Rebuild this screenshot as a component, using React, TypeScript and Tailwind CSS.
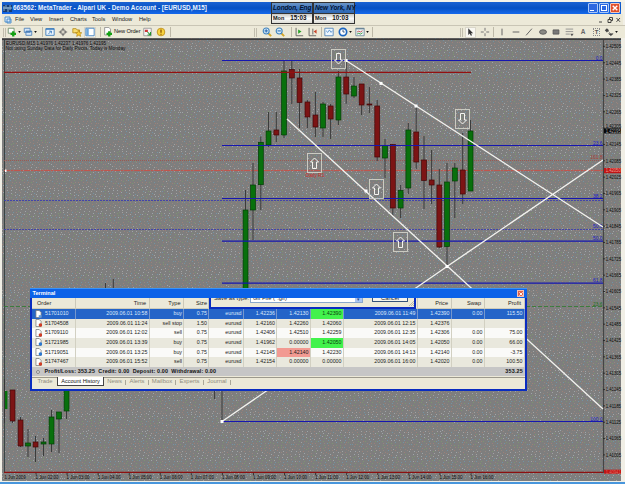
import React from "react";

type Candle = [number, number, number, number, number, "g" | "r"];

// centre x, high, body top, body bottom, low, colour
const candles: Candle[] = [
  [12.5, 390, 390, 421, 423, "r"],
  [20.5, 417, 420, 446, 447, "r"],
  [28, 429, 443, 446, 457, "g"],
  [35.5, 436, 442, 447, 462, "r"],
  [43.5, 438, 442, 444, 456, "g"],
  [51.5, 410, 417, 444, 452, "g"],
  [59, 412, 412, 419, 453, "g"],
  [66.5, 388, 388, 411, 419, "g"],
  [245.5, 190, 210, 289, 289, "g"],
  [253, 163, 185, 210, 240, "g"],
  [260.8, 136.5, 142.3, 184.7, 210, "g"],
  [268.5, 112, 131, 145, 147, "g"],
  [276.3, 112, 130, 135, 142, "r"],
  [284, 60, 71, 135, 138, "g"],
  [291.8, 61, 69.5, 78, 104, "r"],
  [299.5, 69, 78, 102.5, 128, "r"],
  [307.4, 100, 102, 117, 128, "r"],
  [315.4, 92, 115, 127, 137, "r"],
  [323, 102, 104, 128, 137, "g"],
  [330.6, 104, 106, 119, 139, "r"],
  [338.4, 71, 77, 120, 125, "g"],
  [346.2, 60, 77, 94, 104, "r"],
  [354, 77, 86, 96, 98, "g"],
  [361.6, 84, 84, 105, 115, "r"],
  [369.4, 87, 104, 105, 113, "r"],
  [377.2, 100, 106, 157, 161, "r"],
  [385, 139, 145.5, 158, 178, "g"],
  [392.8, 144, 144.5, 208, 216, "r"],
  [400.6, 185, 190.5, 208, 218, "g"],
  [408.3, 123, 130, 188, 194, "g"],
  [416.2, 106, 132, 162, 169, "r"],
  [424, 136, 160, 180.5, 209, "r"],
  [431.6, 150, 180, 185, 204, "r"],
  [439.3, 169, 185, 247, 248, "r"],
  [447, 163, 182, 246.5, 266, "g"],
  [454.8, 163, 168, 181, 218, "g"],
  [462.7, 133, 170, 194, 204, "r"],
  [470.5, 120, 131, 191, 191, "g"],
];

const fibs: [number, string][] = [
  [60.5, "0.0"],
  [145.5, "23.6"],
  [198.5, "38.2"],
  [241.2, "50.0"],
  [283.2, "61.8"],
  [421.5, "100.0"],
];

const hours = ["02:00", "03:00", "04:00", "05:00", "06:00", "07:00", "08:00", "09:00", "10:00", "11:00", "12:00", "13:00", "14:00", "15:00", "16:00"];

// Evenly scattered specks for the chart's dithered grey
const speckColors = ["#a2a2a2", "#7393a3", "#9c8078", "#9fa5a8", "#7d9570", "#96867f"];
const specks = Array.from({ length: 420 }, (_, i) => ({
  x: Math.floor(((i * 0.7548776662) % 1) * 59),
  y: Math.floor(((i * 0.5698402910) % 1) * 61),
  fill: speckColors[(i * 7) % 6 === 0 ? (i % 5) + 1 : (i * 5 + (i >> 3)) % 6],
}));

function Arrow({ x, y, up }: { x: number; y: number; up?: boolean }) {
  return (
    <g transform={`translate(${x} ${y})`} fill="none" stroke="#d2d2c8">
      <rect x="0.5" y="0.5" width="14" height="19" strokeWidth="0.9" />
      <path
        transform={up ? "rotate(180 7.5 10)" : undefined}
        d="M5.5 4.5h4v6.5h2L7.5 15 3.5 11h2z"
        strokeWidth="1"
        stroke="#f4f4f0"
      />
    </g>
  );
}

function Chart() {
  return (
    <svg viewBox="0 38 625 443" width="625" height="443" className="block" fontFamily="'Liberation Sans', Arial, sans-serif">
      <defs>
        <pattern id="grain" width="59" height="61" patternUnits="userSpaceOnUse">
          <rect width="59" height="61" fill="#7e7e7e" />
          {specks.map((s, i) => (
            <rect key={i} x={s.x} y={s.y} width="1" height="1" fill={s.fill} />
          ))}
        </pattern>
      </defs>
      <rect x="0" y="38" width="625" height="443" fill="#f1efe6" />
      <rect x="2" y="38" width="619" height="443" fill="url(#grain)" />
      <path d="M2 39.2H621" stroke="#3c3c3c" strokeWidth="1.4" />
      <path d="M4.5 40V473" stroke="#3a4444" />
      <path d="M603.5 40V473" stroke="#454545" strokeWidth="1.2" />

      <path d="M4 160.5H603" stroke="#a34c44" strokeWidth="0.8" strokeDasharray="1 1" />
      <path d="M4 170.5H603" stroke="#d03a30" strokeWidth="1.1" strokeDasharray="6 1 2 1" />
      <path d="M4 170.5H603" stroke="#b0706a" strokeWidth="1.6" opacity="0.5" />
      <path d="M4 200.5H603M4 229.5H603" stroke="#3c3cae" strokeWidth="0.9" strokeDasharray="2 1" />
      <path d="M4 306.5H603" stroke="#2c7a2c" strokeWidth="0.8" strokeDasharray="4 2" />
      <path d="M4 472.4H603" stroke="#8c1010" strokeWidth="1.2" />

      {candles.map(([x, h, t, b, l, c]) => (
        <g key={x}>
          <path d={`M${x} ${h}V${l}`} stroke="#333" strokeWidth="0.9" />
          <rect
            x={x - 2.4}
            y={t}
            width="4.9"
            height={b - t}
            fill={c === "g" ? "#08700c" : "#7c1414"}
            stroke={c === "g" ? "#033c06" : "#420808"}
            strokeWidth="0.7"
          />
        </g>
      ))}
      <path d="M4.5 379V423M214.6 388V399M222 388V421M105.5 283V289M113.3 279V289" stroke="#333" strokeWidth="0.9" />
      <rect x="5" y="391" width="2.4" height="18" fill="#08700c" />

      <path d="M4 72.4H471" stroke="#941010" strokeWidth="1.3" />
      {fibs.map(([y, label]) => (
        <g key={label}>
          <path d={`M222 ${y}H603`} stroke="#1616b0" strokeWidth="1.2" />
          <text x="602.5" y={y - 0.8} fontSize="4.9" fill="#2020c4" textAnchor="end">
            {label}
          </text>
        </g>
      ))}
      <text x="602.5" y="159.3" fontSize="4.9" fill="#a83c34" textAnchor="end">161.8</text>
      <text x="602.5" y="228.3" fontSize="4.9" fill="#2020c4" textAnchor="end">50.0</text>
      <text x="602.5" y="305.5" fontSize="4.9" fill="#1c701c" textAnchor="end">23.6</text>
      <text x="305.5" y="176.600" fontSize="5.2" fill="#d03028" textLength="19" lengthAdjust="spacingAndGlyphs">
        Daily R1
      </text>

      <g stroke="#f2f2ee" strokeWidth="1.35" fill="none">
        <path d="M346 60.5L603 227M287 119L603 409M222 421.5L447 266.5L603 160" />
      </g>
      <g fill="#fff">
        {[[346, 60.5], [381, 83.4], [416, 106], [366, 191], [447, 266.5], [222, 421.5]].map(([x, y]) => (
          <rect key={x} x={x - 1.5} y={y - 1.5} width="3" height="3" />
        ))}
        <rect x="5" y="169.5" width="1.5" height="2.5" />
      </g>
      <Arrow x={331} y={49} />
      <Arrow x={307} y={153} up />
      <Arrow x={369} y={179} up />
      <Arrow x={393} y={232} up />
      <Arrow x={455} y={109} />

      <g fontSize="5.5" fill="#0c0c0c">
        {Array.from({ length: 26 }, (_, i) => {
          const y = 46.4 + i * 16.34;
          return (
            <g key={i}>
              <path d={`M603 ${y}h2`} stroke="#222" strokeWidth="0.8" />
              <text x="605.7" y={i === 5 ? 128.2 : y + 1.9} fontSize={i === 5 ? 4.6 : 5.5} textLength="15.3" lengthAdjust="spacingAndGlyphs">
                {(1.42505 - i * 0.0006).toFixed(5)}
              </text>
            </g>
          );
        })}
        <rect x="604" y="128.4" width="17" height="5" fill="#080808" />
        <text x="605.7" y="132.8" fontSize="4.8" fill="#a8a8a8" textLength="15" lengthAdjust="spacingAndGlyphs">1.42195</text>
        <rect x="604" y="168" width="17" height="5.2" fill="#c01414" />
        <text x="605.7" y="172.4" fontSize="5" fill="#f0a098" textLength="15" lengthAdjust="spacingAndGlyphs">1.42050</text>
        <rect x="604" y="469.7" width="17" height="4" fill="#c01414" />
        <text x="605.7" y="473.5" fontSize="4.8" fill="#e06a60" textLength="15" lengthAdjust="spacingAndGlyphs">1.40941</text>

        <text x="4.5" y="479" textLength="21" lengthAdjust="spacingAndGlyphs">1 Jun 2009</text>
        {hours.map((h, i) => (
          <g key={h}>
            <path d={`M${36 + i * 31.07} 473v2`} stroke="#222" strokeWidth="0.8" />
            <text x={35.5 + i * 31.07} y="479" textLength="23" lengthAdjust="spacingAndGlyphs">
              {`1 Jun ${h}`}
            </text>
          </g>
        ))}
        <text x="6" y="45.4" fontSize="5.2" textLength="100" lengthAdjust="spacingAndGlyphs">
          EURUSD,M15  1.41976 1.42237 1.41976 1.42195
        </text>
        <text x="5.5" y="50.4" fontSize="5.2" textLength="120" lengthAdjust="spacingAndGlyphs">
          Not using Sunday Data for Daily Pivots.  Today is Monday
        </text>
      </g>
    </svg>
  );
}

function Icon({ w, children }: { w: string; children?: React.ReactNode }) {
  return (
    <span className={`flex h-full shrink-0 items-center justify-center ${w}`}>
      <svg viewBox="0 0 12 12" width="10" height="10" fill="none">
        {children}
      </svg>
    </span>
  );
}

const Caret = () => (
  <svg viewBox="0 0 4 3" width="3" height="2" className="shrink-0">
    <path d="M0 0h4L2 3z" fill="#111" />
  </svg>
);
const Sep = () => <span className="h-[10px] w-px shrink-0 bg-[#bdb9a8]" />;
const Grip = () => <span className="h-[9px] w-[3px] shrink-0 border-x border-[#c2beae]" />;

const Plus = () => (
  <path d="M7.5 5v6.500M4.200 8.200h6.600" stroke="#12a012" strokeWidth="2.800" />
);

function Magnifier({ plus }: { plus?: boolean }) {
  return (
    <>
      <path d="M7.5 7.5L11 11" stroke="#d5a628" strokeWidth="2.2" />
      <circle cx="5" cy="4.7" r="3.6" fill="#d7ecfb" stroke="#3f82bd" strokeWidth="1.3" />
      <path d={plus ? "M3 4.7h4M5 2.7v4" : "M3 4.7h4"} stroke="#1e62ac" strokeWidth="1.2" />
    </>
  );
}

function Toolbar() {
  return (
    <div className="flex h-[13px] items-center border-t border-[#c9c5b5] bg-[#ece9d8]">
      <div className="flex h-full w-[254px] items-center pl-[3px]">
        <Grip />
        <Icon w="w-[12px]">
          <path d="M1.5 1.5h7v6h-7z" fill="#fff" stroke="#668a66" />
          <Plus />
        </Icon>
        <Caret />
        <Icon w="w-[13px]">
          <path d="M1.5 1.5h7v5h-7zM3.5 5h7v5h-7z" fill="#d4e6f8" stroke="#4b80b8" />
          <path d="M3.5 5.4h7" stroke="#4b80b8" strokeWidth="1.5" />
        </Icon>
        <Caret />
        <span className="w-[5px]" />
        <Sep />
        <Icon w="w-[13px]">
          <path d="M1 2h10v8H1z" fill="#eaf4fd" stroke="#3377bb" />
          <path d="M1 2.5h10" stroke="#3377bb" strokeWidth="1.5" />
          <path d="M4 8.500l3.500-3.500M5 5h2.700v2.700" stroke="#3377bb" />
        </Icon>
        <Icon w="w-[14px]">
          <circle cx="6" cy="6" r="3" stroke="#666" />
          <path d="M6 1v4M6 7v4M1 6h4M7 6h4" stroke="#666" strokeWidth="1.2" />
        </Icon>
        <Icon w="w-[13px]">
          <path d="M1 2h4l1 1.5h3V7H1z" fill="#f8db6b" stroke="#b68a17" />
          <path d="M8 4l1.2 2.5 2.6.3-1.9 1.9.5 2.6L8 10l-2.4 1.3.5-2.6L4.2 6.8l2.6-.3z" fill="#f6c934" stroke="#ae7e10" strokeWidth="0.7" />
        </Icon>
        <span className="ml-px flex h-[11px] w-[12px] items-center border border-[#d8d5c8] bg-[#f8f7f1]">
          <Icon w="w-[10px]">
            <path d="M1 1.5h10v9H1z" fill="#fff" stroke="#3377bb" />
            <path d="M1.5 2h3v8h-3z" fill="#6aa7de" />
          </Icon>
        </span>
        <span className="w-[4px]" />
        <Sep />
        <Icon w="w-[13px]">
          <path d="M2 .5h5l2 2v7H2z" fill="#fff" stroke="#888" />
          <Plus />
        </Icon>
        <span className="w-[29px] whitespace-nowrap text-[5.700px] leading-none tracking-[-0.120px] text-[#111]">New Order</span>
        <Icon w="w-[9px]">
          <path d="M1 1h10v10H1z" fill="#f4f4f4" stroke="#888" />
          <path d="M2.5 3h4v3h-4z" fill="#cc3535" />
          <path d="M6 6l4 4M10 6v4H6" stroke="#21922b" strokeWidth="1.4" />
        </Icon>
        <Icon w="w-[18px]">
          <circle cx="6" cy="6" r="4.6" fill="#f8d33e" stroke="#bd8c13" />
          <path d="M6 3v3.8M6 8v1.3" stroke="#8a5604" strokeWidth="1.6" />
        </Icon>
        <Sep />
      </div>
      <div className="flex h-full w-[206px] items-center">
        <Grip />
        <span className="w-[5px]" />
        <Icon w="w-[10px]"><Magnifier plus /></Icon>
        <Icon w="w-[16px]"><Magnifier /></Icon>
        <span className="w-[3px]" />
        <Sep />
        <Icon w="w-[13px]">
          <path d="M2.5 1v9.5H11" stroke="#555" />
          <path d="M5 3l4 2.5L5 8z" fill="#22a022" />
        </Icon>
        <Icon w="w-[13px]">
          <path d="M2.5 1v9.5H11M7 2v7" stroke="#555" />
          <path d="M11.5 3v5L8 5.5z" fill="#c84428" />
        </Icon>
        <span className="w-[3px]" />
        <Sep />
        <Icon w="w-[14px]">
          <path d="M1 1.5h10v9H1z" fill="#eef7ff" stroke="#4b80b8" />
          <path d="M2.5 4.5l2 2 2-3 2 3 1.5-2" stroke="#508bc9" />
        </Icon>
        <Icon w="w-[13px]">
          <circle cx="6" cy="6" r="4.4" fill="#fff" stroke="#1c66c0" strokeWidth="2" />
          <path d="M6 3.3V6h2" stroke="#1b3f70" />
        </Icon>
        <Caret />
        <span className="w-[2px]" />
        <Icon w="w-[12px]">
          <path d="M1 1.5h10v9H1z" fill="#eef4f6" stroke="#6b8596" />
          <path d="M1 2h10" stroke="#6b8596" strokeWidth="1.6" />
          <path d="M2.5 6l2-1 2 1L9 4.5" stroke="#bc3e3e" />
          <path d="M2.5 8.5l2-1 2 1L9 7" stroke="#22922c" />
        </Icon>
        <Caret />
        <span className="w-[3px]" />
        <Sep />
      </div>
      <div className="flex h-full flex-1 items-center">
        <Grip />
        <span className="ml-[2px] flex h-[11px] w-[11px] items-center border border-[#dad7ca] bg-[#f8f7f1]">
          <Icon w="w-[9px]">
            <path d="M3 1v9l2-2 1.5 3 1.5-.8L6.7 7.500H9.500z" fill="#333" />
          </Icon>
        </span>
        <Icon w="w-[17px]"><path d="M6 1v3.500M6 7.500V11M1 6h3.500M7.500 6H11" stroke="#777" strokeWidth="1.200" /></Icon>
        <Sep />
        <Icon w="w-[15px]"><path d="M6 2v8" stroke="#666" strokeWidth="1.200" /></Icon>
        <Icon w="w-[13px]"><path d="M2 6h8" stroke="#666" strokeWidth="1.200" /></Icon>
        <Icon w="w-[14px]"><path d="M2.500 10L9.500 2" stroke="#666" strokeWidth="1.200" /></Icon>
        <Icon w="w-[13px]"><ellipse cx="6" cy="6" rx="4.200" ry="2.700" fill="#8a8a84" stroke="#555" /></Icon>
        <Icon w="w-[13px]"><path d="M2.500 3.500h7v5h-7z" fill="#787878" stroke="#555" /></Icon>
        <Icon w="w-[14px]"><path d="M2 2.500h9M2 5.500h9M2 8.500h5" stroke="#888" /><path d="M7.500 8h4l-2 3z" fill="#555" /></Icon>
        <span className="w-[14px] text-center text-[6.5px] font-bold leading-none text-[#666]">A</span>
        <span className="flex w-[13px] justify-center">
          <span className="h-[8px] w-[7px] border border-dotted border-[#888] text-center text-[6px] font-bold leading-[6px] text-[#555]">T</span>
        </span>
        <Icon w="w-[12px]">
          <path d="M1 4L3.500 1.500 6 4 3.500 6.500z" fill="#444" />
          <path d="M5.500 8l2.700 2.500L11 8zM5 5l3 3" fill="#444" stroke="#444" strokeWidth="0.600" />
        </Icon>
        <Caret />
      </div>
    </div>
  );
}

const menus = [
  ["File", "w-[15px]"],
  ["View", "w-[19px]"],
  ["Insert", "w-[21px]"],
  ["Charts", "w-[22px]"],
  ["Tools", "w-[20px]"],
  ["Window", "w-[27px]"],
  ["Help", "w-[14px]"],
];

const grid =
  "grid grid-cols-[43.5px_74px_34.5px_25px_34.5px_33.5px_33.5px_33px_74px_34px_33px_40px]";

const rows: string[][] = [
  ["51701010", "2009.06.01 10:58", "buy", "0.75", "eurusd", "1.42236", "1.42130", "1.42390", "2009.06.01 11:49", "1.42390", "0.00", "115.50"],
  ["51704508", "2009.06.01 11:24", "sell stop", "1.50", "eurusd", "1.42160", "1.42260", "1.42060", "2009.06.01 12:15", "1.42376", "", ""],
  ["51709110", "2009.06.01 12:02", "sell", "0.75", "eurusd", "1.42406", "1.42510", "1.42259", "2009.06.01 12:35", "1.42306", "0.00", "75.00"],
  ["51721985", "2009.06.01 13:39", "buy", "0.75", "eurusd", "1.41962", "0.00000", "1.42050", "2009.06.01 14:05", "1.42050", "0.00", "66.00"],
  ["51719051", "2009.06.01 13:25", "buy", "0.75", "eurusd", "1.42145", "1.42140", "1.42230", "2009.06.01 14:13", "1.42140", "0.00", "-3.75"],
  ["51747467", "2009.06.01 15:52", "sell", "0.75", "eurusd", "1.42154", "0.00000", "0.00000", "2009.06.01 16:00", "1.42020", "0.00", "100.50"],
];
const headers = ["Order", "Time", "Type", "Size", "", "", "", "", "", "Price", "Swap", "Profit"];

function cellTint(r: number, c: number) {
  if (c === 7 && (r === 0 || r === 3)) return "bg-[#42f24c] text-[#0b3d10]";
  if (c === 6 && r === 4) return "bg-[#f29a92]";
  return "";
}

function Terminal() {
  return (
    <div className="absolute left-[30px] top-[288px] flex h-[103px] w-[497px] flex-col border-x-2 border-b-2 border-[#0a2cc0] bg-[#ece9d8] text-[5.3px] leading-none text-[#1c1c1c]">
      <div className="-mx-[2px] flex h-[10px] shrink-0 items-center justify-between border-t border-[#3a94f8] bg-[#0c62e8] pl-[2.5px] pr-[3px]">
        <span className="text-[5.600px] font-bold text-white">Terminal</span>
        <span className="flex h-[7px] w-[7px] items-center justify-center border border-[#f4c4b8] bg-[#e0644a]">
          <svg viewBox="0 0 5 5" width="4" height="4"><path d="M.5.5l4 4M4.500.5l-4 4" stroke="#fff" strokeWidth="1.200" /></svg>
        </span>
      </div>
      <div className="relative h-[11px] shrink-0">
        <div className={`${grid} h-full border-b border-[#cfccba]`}>
          {headers.map((h, i) => (
            <span
              key={i}
              className={`flex items-center border-r border-[#cbc8b8] pt-[2px] text-[5.6px] ${i === 0 ? "pl-[5px]" : i === 3 ? "justify-end pr-[1px]" : "justify-end pr-[2.5px]"}`}
            >
              {h}
            </span>
          ))}
        </div>
        <div className="absolute left-[177px] top-0 flex h-[10.500px] w-[207px] items-start overflow-hidden border-x-2 border-b-2 border-[#0a2cc0] bg-[#ece9d8] text-[5.8px]">
          <span className="ml-[3px] mt-[-2.500px] w-[36px] whitespace-nowrap">Save as type:</span>
          <span className="flex h-[5px] w-[113px] items-start justify-between border-x border-b border-[#8aa8cc] bg-white pl-[2px]">
            <span className="mt-[-2.500px]">Gif File (*.gif)</span>
            <span className="h-[4px] w-[7px] bg-[#a9c5f5] text-center text-[5px] leading-[3px] text-[#2b4a8a]">▾</span>
          </span>
          <span className="ml-[9px] flex h-[4px] w-[36px] justify-center rounded-b-[1px] border-x border-b border-[#36527a] bg-[#f5f4ee]">
            <span className="mt-[-2.500px]">Cancel</span>
          </span>
          <svg viewBox="0 0 5 5" width="5" height="5" className="ml-auto mt-[3px]">
            <path d="M0 5L5 0M2 5l3-3M4 5l1-1" stroke="#a8a492" strokeWidth="0.700" />
          </svg>
        </div>
      </div>
      {rows.map((row, r) => (
        <div
          key={r}
          className={`${grid} h-[9.650px] shrink-0 ${r === 0 ? "bg-[#2464c8] text-[#dce8fa]" : r % 2 ? "bg-[#e9e8dd]" : "bg-[#fafaf8]"}`}
        >
          {row.map((v, c) => (
            <span
              key={c}
              className={`flex items-center whitespace-nowrap border-r ${r === 0 ? "border-[#7597cd]" : "border-[#d2d0c2]"} ${c === 0 ? "pl-[2.500px]" : "justify-end pr-[1px]"} ${cellTint(r, c)}`}
            >
              {c === 0 && (
                <svg viewBox="0 0 8 9" width="7.500" height="8.500" className="mr-[3px] shrink-0">
                  <path d="M1 .5h3.500L6.500 2.500V8H1z" fill="#fff" stroke="#777" strokeWidth="0.800" />
                  {r > 0 && <circle cx="5.800" cy="6.300" r="1.900" fill={r === 3 || r === 4 ? "#2c78d0" : "#d03c24"} />}
                  {r === 0 && <path d="M4 5.500h3v2.500H4z" fill="#5c9ae2" />}
                </svg>
              )}
              {v}
            </span>
          ))}
        </div>
      ))}
      <div className="flex h-[9.500px] shrink-0 items-center justify-between bg-[#c6c6c6] pl-[4px] pr-[2px] text-[5.400px] font-bold text-[#111]">
        <span className="flex items-center">
          <span className="mr-[4.500px] h-[4px] w-[4px] rounded-full border border-[#888] bg-[#ddd]" />
          <span className="whitespace-pre tracking-[0.140px]">Profit/Loss: 353.25  Credit: 0.00  Deposit: 0.00  Withdrawal: 0.00</span>
        </span>
        <span className="tracking-[0.200px]">353.25</span>
      </div>
      <div className="mt-[1px] flex h-[9px] shrink-0 border-t border-[#9c998c] text-[5.900px] text-[#8e8b7e]">
        <span className="flex w-[25px] items-center justify-center pl-px">Trade</span>
        <span className="-mt-px flex w-[47px] items-center justify-center whitespace-nowrap border-x border-b border-[#444] bg-white text-[5.500px] text-[#111]">Account History</span>
        {[["News", "w-[22px]"], ["Alerts", "w-[23px]"], ["Mailbox", "w-[27px]"], ["Experts", "w-[28px]"], ["Journal", "w-[27px]"]].map(([t, w]) => (
          <span key={t} className={`flex items-center ${w}`}>
            <span className="flex-1 text-center">{t}</span>
            <span className="h-[5px] w-px bg-[#aaa798]" />
          </span>
        ))}
      </div>
    </div>
  );
}

function Clock({ city, time }: { city: string; time: string }) {
  return (
    <div className="flex w-1/2 flex-col border border-[#333]">
      <div className="h-[9.500px] whitespace-nowrap bg-gradient-to-b from-[#6d96c4] via-[#3c76c0] to-[#3068b4] pl-px text-[6.500px] font-bold italic leading-[10px] tracking-[-0.130px] text-[#04122e]">
        {city}
      </div>
      <div className="flex flex-1 items-center gap-[6px] border-t border-[#333] bg-gradient-to-b from-[#c9c9c5] via-[#fafaf8] to-[#dcdcd6] pl-[1px] font-bold leading-none text-[#111]">
        <span className="text-[5.500px]">Mon</span>
        <span className="text-[6.300px]">{time}</span>
      </div>
    </div>
  );
}

export default function App() {
  return (
    <div className="relative flex h-[484px] w-[625px] flex-col overflow-hidden bg-[#f1efe6] font-['Liberation_Sans',Arial,sans-serif]">
      <div className="h-[2px] shrink-0 bg-[#f6f4ea]" />
      <div className="mx-[2px] mr-[4px] flex h-[12px] shrink-0 items-center bg-gradient-to-b from-[#1b63d2] via-[#0752c4] to-[#1468ec]">
        <svg viewBox="0 0 9 9" width="9" height="9" className="ml-px">
          <path d="M0 1h9v7H0z" fill="#173c72" />
          <path d="M1 2v5M3 1v4M5 3v5M7 1v5M0 4h9" stroke="#a5cbe8" strokeWidth="0.800" />
        </svg>
        <span className="ml-[1px] w-[197px] whitespace-pre text-[6.300px] font-bold leading-none tracking-[0.020px] text-[#eaf3ff]">
          663562: MetaTrader - Alpari UK - Demo Account - [EURUSD,M15]
        </span>
        <div className="ml-auto flex gap-[1px] pr-[1px]">
          <span className="flex h-[10px] w-[10px] items-end rounded-[1px] border border-[#a9c8f8] bg-[#2c68e0] p-[1px]">
            <span className="h-[1.500px] w-[4px] bg-white" />
          </span>
          <span className="flex h-[10px] w-[10px] items-center justify-center rounded-[1px] border border-[#a9c8f8] bg-[#2c68e0]">
            <span className="h-[5.500px] w-[5.500px] border border-t-[1.500px] border-white" />
          </span>
          <span className="flex h-[10px] w-[10px] items-center justify-center rounded-[1px] border border-[#f4c8b8] bg-[#e0502c]">
            <svg viewBox="0 0 6 6" width="6" height="6"><path d="M.7.7l4.600 4.600M5.300.7L.7 5.300" stroke="#fff" strokeWidth="1.400" /></svg>
          </span>
        </div>
      </div>
      <div className="mx-[2px] flex h-[11px] shrink-0 items-center bg-[#ece9d8] text-[5.700px] leading-none text-[#1a1a1a]">
        <svg viewBox="0 0 8 8" width="8" height="8" className="ml-[2px] mr-[3px]">
          <path d="M1 1h5v5H1zM3 3h4v4H3z" fill="#dcecfb" stroke="#4389c7" strokeWidth="0.900" />
        </svg>
        {menus.map(([m, w]) => (
          <span key={m} className={w}>{m}</span>
        ))}
        <svg viewBox="0 0 26 8" width="26" height="8" className="ml-auto mr-[1px]" fill="none" stroke="#333" strokeWidth="0.900">
          <path d="M3 6h3M12 3.500h3v3h-3zM13.500 3.200V1.500h3v3H15M20.500 2l3.500 3.800M24 2l-3.500 3.800" />
        </svg>
      </div>
      <Toolbar />
      <Chart />
      <div className="mt-[1px] h-[2px] shrink-0 bg-[#4896dc]" />

      <div className="absolute left-[271px] top-[2px] flex h-[22px] w-[84px]">
        <Clock city="London, Eng" time="15:03" />
        <Clock city="New York, NY" time="10:03" />
      </div>
      <Terminal />
    </div>
  );
}
